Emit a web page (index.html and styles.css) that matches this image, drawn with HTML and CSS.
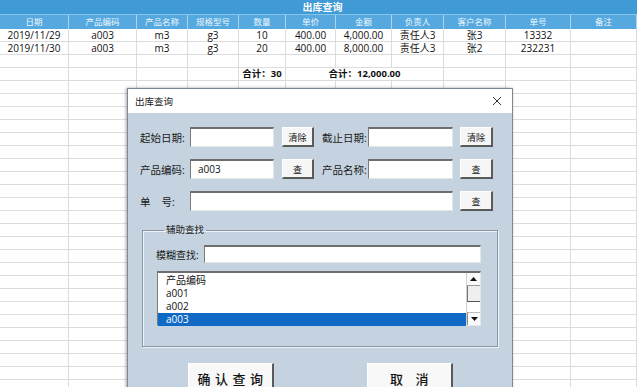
FILE: index.html
```html
<!DOCTYPE html>
<html lang="zh-CN">
<head>
<meta charset="utf-8">
<title>出库查询</title>
<link rel="stylesheet" href="styles.css">
</head>
<body>
<div class="sheet">
  <div class="banner">出库查询</div>
  <div class="row head">
    <div class="c">日期</div><div class="c">产品编码</div><div class="c">产品名称</div><div class="c">规格型号</div><div class="c">数量</div><div class="c">单价</div><div class="c">金额</div><div class="c">负责人</div><div class="c">客户名称</div><div class="c">单号</div><div class="c">备注</div>
  </div>
  <div class="row">
    <div class="c">2019/11/29</div><div class="c">a003</div><div class="c">m3</div><div class="c">g3</div><div class="c">10</div><div class="c">400.00</div><div class="c">4,000.00</div><div class="c">责任人3</div><div class="c">张3</div><div class="c">13332</div><div class="c"></div>
  </div>
  <div class="row">
    <div class="c">2019/11/30</div><div class="c">a003</div><div class="c">m3</div><div class="c">g3</div><div class="c">20</div><div class="c">400.00</div><div class="c">8,000.00</div><div class="c">责任人3</div><div class="c">张2</div><div class="c">232231</div><div class="c"></div>
  </div>
  <div class="row">
    <div class="c"></div><div class="c"></div><div class="c"></div><div class="c"></div><div class="c"></div><div class="c"></div><div class="c"></div><div class="c"></div><div class="c"></div><div class="c"></div><div class="c"></div>
  </div>
  <div class="row total">
    <div class="c"></div><div class="c"></div><div class="c"></div><div class="c"></div><div class="c b">合计：30</div><div class="c b span3">合计：12,000.00</div><div class="c"></div><div class="c"></div><div class="c"></div>
  </div>
  <div class="row filler">
    <div class="f"></div><div class="f"></div><div class="f"></div><div class="f"></div><div class="f"></div><div class="f"></div><div class="f"></div><div class="f"></div><div class="f"></div><div class="f"></div><div class="f"></div>
  </div>
</div>

<div class="dialog">
  <div class="dlg-title">
    <span>出库查询</span>
    <svg class="close" width="10" height="10" viewBox="0 0 10 10"><path d="M1 1 L9 9 M9 1 L1 9" stroke="#333" stroke-width="1" fill="none"/></svg>
  </div>
  <div class="dlg-body">
    <div class="frow">
      <span class="lbl">起始日期:</span><span class="inp w84"></span><span class="btn sm ml8">清除</span>
      <span class="lbl lbl2 ml8">截止日期:</span><span class="inp w85"></span><span class="btn sm ml7 w33">清除</span>
    </div>
    <div class="frow">
      <span class="lbl">产品编码:</span><span class="inp w84 val">a003</span><span class="btn sm ml8">查</span>
      <span class="lbl lbl2 ml8">产品名称:</span><span class="inp w85"></span><span class="btn sm ml7 w33">查</span>
    </div>
    <div class="frow">
      <span class="lbl">单&nbsp;&nbsp;&nbsp;&nbsp;号:</span><span class="inp wlong"></span><span class="btn sm ml7 w33">查</span>
    </div>
    <fieldset class="group">
      <legend>辅助查找</legend>
      <div class="srow"><span class="lbl slbl">模糊查找:</span><span class="inp sinp"></span></div>
      <div class="list">
        <div class="items">
          <div class="it">产品编码</div>
          <div class="it">a001</div>
          <div class="it">a002</div>
          <div class="it sel">a003</div>
        </div>
        <div class="sbar">
          <div class="arr up"><svg width="7" height="4" viewBox="0 0 7 4"><path d="M0 4 L3.5 0 L7 4Z" fill="#111"/></svg></div>
          <div class="thumb"></div>
          <div class="track"></div>
          <div class="arr dn"><svg width="7" height="4" viewBox="0 0 7 4"><path d="M0 0 L3.5 4 L7 0Z" fill="#111"/></svg></div>
        </div>
      </div>
    </fieldset>
    <div class="brow">
      <span class="btn big">确认查询</span>
      <span class="btn big b2">取 消</span>
    </div>
  </div>
</div>
</body>
</html>
```

FILE: styles.css
```css
* { box-sizing: border-box; }
html, body { margin: 0; padding: 0; }
body {
  width: 637px;
  height: 387px;
  overflow: hidden;
  background: #fff;
  font-family: "Open Sans", "Noto Sans CJK SC", sans-serif;
  color: #111;
  position: relative;
}
.sheet {
  display: flex;
  flex-direction: column;
  height: 387px;
}
.banner {
  height: 15px;
  background: #3f9ad5;
  border-bottom: 1px solid #86c4ea;
  color: #fff;
  font-weight: bold;
  font-size: 10px;
  line-height: 14px;
  text-align: center;
  padding-left: 8px;
}
.row {
  display: grid;
  grid-template-columns: 69px 68px 51px 51px 47px 50px 56px 52px 62px 65px 66px;
  height: 13px;
}
.c {
  border-right: 1px solid #dcdcdc;
  border-bottom: 1px solid #dcdcdc;
  font-size: 10px;
  line-height: 12px;
  text-align: center;
  white-space: nowrap;
  overflow: visible;
}
.head { height: 14px; }
.head .c {
  background: #56a9df;
  border-right: 1px solid #a9d5f1;
  border-bottom: none;
  color: #eef7fd;
  font-size: 8.5px;
  line-height: 14px;
}
.total .c.b {
  font-weight: bold;
  font-size: 9.5px;
}
.span3 { grid-column: span 3; }
.filler { flex: 1; height: auto; }
.f {
  border-right: 1px solid #dcdcdc;
  background: repeating-linear-gradient(to bottom, transparent 0, transparent 12px, #dcdcdc 12px, #dcdcdc 13px);
}

/* dialog */
.dialog {
  position: absolute;
  left: 127px;
  top: 88px;
  width: 386px;
  height: 310px;
  border: 1px solid #7c8896;
  box-shadow: -1px 0 3px rgba(0,0,0,0.35);
  font-family: "Open Sans", "Noto Sans CJK SC", sans-serif;
  display: flex;
  flex-direction: column;
}
.dlg-title {
  height: 24px;
  background: #fff;
  display: flex;
  align-items: center;
  justify-content: space-between;
  padding: 0 10px 0 7px;
  font-size: 9.5px;
  color: #222;
}
.dlg-body {
  flex: 1;
  background: #c5d3e0;
  padding: 14px 0 0 12px;
}
.frow {
  display: flex;
  align-items: center;
  height: 20px;
  margin-bottom: 12px;
}
.lbl {
  font-size: 10.5px;
  color: #1a1a1a;
  white-space: nowrap;
  width: 50px;
}
.lbl2 { width: 46px; }
.inp {
  display: block;
  height: 20px;
  background: #fff;
  border-top: 2px solid #6e6e6e;
  border-left: 1px solid #7a7a7a;
  border-right: 1px solid #e6e6e6;
  border-bottom: 1px solid #e6e6e6;
  font-size: 10px;
  line-height: 17px;
}
.val { padding-left: 7px; }
.w84 { width: 84px; }
.w85 { width: 85px; }
.wlong { width: 263px; }
.btn {
  display: flex;
  align-items: center;
  justify-content: center;
  background: #f6f6f6;
  border-top: 1px solid #fff;
  border-left: 1px solid #fff;
  border-right: 2px solid #5a5a5a;
  border-bottom: 2px solid #5a5a5a;
  color: #111;
}
.sm {
  width: 32px;
  height: 20px;
  font-size: 9px;
  padding-top: 2px;
}
.w33 { width: 33px; }
.ml8 { margin-left: 8px; }
.ml7 { margin-left: 7px; }

.group {
  margin: 13px 14px 0 2px;
  padding: 9px 14px 21px 13px;
  height: 123px;
  border: 1px solid #8a96a3;
  box-shadow: inset 1px 1px 0 #eef3f7, 1px 1px 0 #eef3f7;
  min-width: 0;
}
.group legend {
  font-size: 9.5px;
  line-height: 12px;
  padding: 0 2px;
  margin-left: 8px;
  color: #1a1a1a;
}
.srow {
  display: flex;
  align-items: center;
  height: 18px;
}
.slbl { width: 48px; font-size: 10px; }
.sinp { width: 277px; height: 18px; }
.list {
  margin: 8px 0 0 1px;
  width: 324px;
  height: 55px;
  background: #fff;
  border-top: 2px solid #6e6e6e;
  border-left: 1px solid #7a7a7a;
  border-right: 1px solid #e6e6e6;
  border-bottom: 1px solid #e6e6e6;
  display: flex;
}
.items { flex: 1; padding-top: 1px; }
.it {
  height: 13px;
  font-size: 10px;
  line-height: 13px;
  padding-left: 8px;
  color: #111;
}
.it.sel {
  background: #1169c6;
  color: #fff;
}
.sbar {
  width: 14px;
  display: flex;
  flex-direction: column;
  border-left: 1px solid #d0d0d0;
}
.arr {
  height: 13px;
  display: flex;
  align-items: center;
  justify-content: center;
  background: #fafafa;
}
.up { border-bottom: 1px solid #9a9a9a; }
.dn { border-top: 1px solid #bdbdbd; border-left: 1px solid #8a8a8a; }
.thumb {
  height: 16px;
  background: #efefef;
  border-bottom: 1px solid #555;
  border-left: 1px solid #777;
}
.track { flex: 1; background: #fff; }

.brow {
  display: flex;
  margin-top: 16px;
  padding-left: 48px;
}
.big {
  width: 86px;
  height: 28px;
  font-size: 13px;
  font-weight: 500;
  letter-spacing: 4.5px;
  padding-left: 4px;
  align-items: flex-start;
  padding-top: 5px;
  border-top: 1px solid #fff;
  border-left: 1px solid #fff;
  background: #f8f8f8;
}
.b2 { margin-left: 93px; }
```
